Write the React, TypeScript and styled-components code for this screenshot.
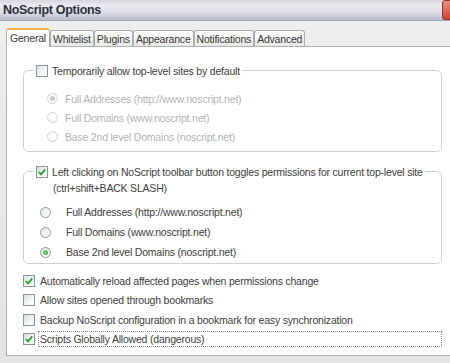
import React from "react";
import styled, { createGlobalStyle } from "styled-components";

const Global = createGlobalStyle`
  html, body { margin: 0; padding: 0; background: #e9e9e9; }
  body {
    font-family: "Liberation Sans", Arial, sans-serif;
    font-size: 10.5px;
    letter-spacing: -0.2px;
    color: #404040;
  }
`;

const Window = styled.div`
  width: 450px;
  height: 363px;
  overflow: hidden;
  display: flex;
  flex-direction: column;
  background: linear-gradient(#efefef, #e4e4e4);
`;

const TitleBar = styled.div`
  height: 20px;
  flex: none;
  display: flex;
  align-items: center;
  justify-content: space-between;
  padding-left: 3px;
  background: linear-gradient(#d6d7e0 0%, #ececf1 30%, #dedfe7 60%, #b8bbc9 100%);
  border-bottom: 1px solid #a2a5b3;
`;

const Title = styled.div`
  font-family: "Liberation Sans", Arial, sans-serif;
  font-weight: bold;
  font-size: 12.5px;
  letter-spacing: -0.3px;
  color: #2c2e3c;
`;

const CloseButton = styled.div`
  width: 20px;
  height: 18px;
  margin-right: -14px;
  border-radius: 3px;
  border: 1px solid #9a3322;
  background: linear-gradient(#ec8f7c, #c9442f);
`;

const Body = styled.div`
  flex: 1;
  display: flex;
  flex-direction: column;
  padding: 6px 0 7px 6px;
`;

const TabStrip = styled.div`
  display: flex;
  align-items: flex-end;
  height: 19px;
  position: relative;
  z-index: 1;
`;

const Tab = styled.div<{ $active?: boolean }>`
  height: ${(p) => (p.$active ? "19px" : "16px")};
  box-sizing: border-box;
  display: flex;
  align-items: center;
  padding: ${(p) => (p.$active ? "0 3px" : "0 2px")};
  margin-right: 0;
  border: 1px solid #a7b0b8;
  border-bottom: ${(p) => (p.$active ? "1px solid #fff" : "none")};
  border-top: ${(p) => (p.$active ? "2px solid #f7b64a" : "1px solid #a7b0b8")};
  border-radius: 3px 3px 0 0;
  margin-bottom: ${(p) => (p.$active ? "-1px" : "0")};
  background: ${(p) => (p.$active ? "#fff" : "linear-gradient(#ffffff, #e9e9e4)")};
  color: #383838;
  white-space: nowrap;
`;

const Panel = styled.div`
  flex: 1;
  background: #fff;
  border: 1px solid #aeb3b8;
  border-right: none;
  padding: 17px 0 0 16px;
  display: flex;
  flex-direction: column;
`;

const Group = styled.fieldset<{ $top?: number }>`
  width: 419px;
  box-sizing: border-box;
  margin: ${(p) => p.$top ?? 0}px 0 0 0;
  padding: 0;
  border: 1px solid #d2d2cc;
  border-radius: 5px;
  min-inline-size: 0;
`;

const Legend = styled.legend`
  margin-left: 10px;
  padding: 0 2px;
  display: flex;
  align-items: center;
  gap: 4px;
  height: 13px;
  white-space: nowrap;
`;

const Hint = styled.div`
  height: 14px;
  margin-top: 3px;
  padding-left: 29px;
  display: flex;
  align-items: center;
`;

const RadioList = styled.div<{ $indent: number; $rowH: number; $padTop: number; $padBottom: number }>`
  display: flex;
  flex-direction: column;
  padding: ${(p) => p.$padTop}px 0 ${(p) => p.$padBottom}px ${(p) => p.$indent}px;
  & > * { height: ${(p) => p.$rowH}px; }
`;

const RadioRow = styled.div<{ $gap: number; $disabled?: boolean }>`
  display: flex;
  align-items: center;
  gap: ${(p) => p.$gap}px;
  color: ${(p) => (p.$disabled ? "#b4b4b4" : "#404040")};
`;

const RadioCircle = styled.span<{ $checked?: boolean; $disabled?: boolean }>`
  width: 11px;
  height: 11px;
  box-sizing: border-box;
  border-radius: 50%;
  flex: none;
  display: flex;
  align-items: center;
  justify-content: center;
  border: 1px solid ${(p) => (p.$disabled ? "#d2d2d2" : "#8a9cb0")};
  background: ${(p) => (p.$disabled ? "#fbfbfb" : "linear-gradient(135deg, #e4e4de, #ffffff)")};
  &::after {
    content: "";
    display: ${(p) => (p.$checked ? "block" : "none")};
    width: 5px;
    height: 5px;
    border-radius: 50%;
    background: ${(p) => (p.$disabled ? "#c6c6c6" : "radial-gradient(circle at 40% 40%, #7fe07f, #21a121)")};
  }
`;

const CheckBox = styled.span`
  width: 12px;
  height: 12px;
  box-sizing: border-box;
  flex: none;
  border: 1px solid #8396aa;
  background: linear-gradient(135deg, #dcdcd6, #ffffff 80%);
  display: flex;
  align-items: center;
  justify-content: center;
`;

const CheckList = styled.div`
  display: flex;
  flex-direction: column;
  margin-top: 7px;
  width: 419px;
`;

const CheckRow = styled.div`
  height: 19.5px;
  display: flex;
  align-items: center;
  gap: 3px;
`;

const CheckLabel = styled.span<{ $focus?: boolean }>`
  flex: ${(p) => (p.$focus ? 1 : "none")};
  height: 16px;
  box-sizing: border-box;
  display: flex;
  align-items: center;
  padding-left: 1px;
  border: 1px ${(p) => (p.$focus ? "dotted #8a8a8a" : "solid transparent")};
`;

const Check = ({ checked }: { checked?: boolean }) => (
  <CheckBox>
    {checked && (
      <svg width="10" height="10" viewBox="0 0 10 10">
        <path d="M1.8 5 L4 7.3 L8.3 2.3" fill="none" stroke="#22a522" strokeWidth="1.8" />
      </svg>
    )}
  </CheckBox>
);

const tabs = ["General", "Whitelist", "Plugins", "Appearance", "Notifications", "Advanced"];

const radioTexts = [
  "Full Addresses (http://www.noscript.net)",
  "Full Domains (www.noscript.net)",
  "Base 2nd level Domains (noscript.net)",
];

export default function App() {
  return (
    <>
      <Global />
      <Window>
        <TitleBar>
          <Title>NoScript Options</Title>
          <CloseButton />
        </TitleBar>
        <Body>
          <TabStrip>
            {tabs.map((t, i) => (
              <Tab key={t} $active={i === 0}>
                {t}
              </Tab>
            ))}
          </TabStrip>
          <Panel>
            <Group>
              <Legend>
                <Check />
                <span>Temporarily allow top-level sites by default</span>
              </Legend>
              <RadioList $indent={23} $rowH={19} $padTop={12} $padBottom={5}>
                {radioTexts.map((t, i) => (
                  <RadioRow key={t} $gap={7} $disabled>
                    <RadioCircle $disabled $checked={i === 0} />
                    <span>{t}</span>
                  </RadioRow>
                ))}
              </RadioList>
            </Group>
            <Group $top={13}>
              <Legend>
                <Check checked />
                <span>Left clicking on NoScript toolbar button toggles permissions for current top-level site</span>
              </Legend>
              <Hint>(ctrl+shift+BACK SLASH)</Hint>
              <RadioList $indent={16} $rowH={20} $padTop={7} $padBottom={1}>
                {radioTexts.map((t, i) => (
                  <RadioRow key={t} $gap={15}>
                    <RadioCircle $checked={i === 2} />
                    <span>{t}</span>
                  </RadioRow>
                ))}
              </RadioList>
            </Group>
            <CheckList>
              <CheckRow>
                <Check checked />
                <CheckLabel>Automatically reload affected pages when permissions change</CheckLabel>
              </CheckRow>
              <CheckRow>
                <Check />
                <CheckLabel>Allow sites opened through bookmarks</CheckLabel>
              </CheckRow>
              <CheckRow>
                <Check />
                <CheckLabel>Backup NoScript configuration in a bookmark for easy synchronization</CheckLabel>
              </CheckRow>
              <CheckRow>
                <Check checked />
                <CheckLabel $focus>Scripts Globally Allowed (dangerous)</CheckLabel>
              </CheckRow>
            </CheckList>
          </Panel>
        </Body>
      </Window>
    </>
  );
}
